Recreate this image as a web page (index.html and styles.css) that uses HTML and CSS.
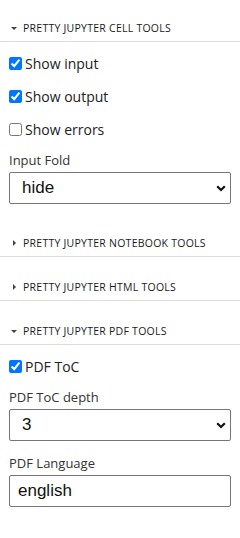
FILE: index.html
```html
<!DOCTYPE html>
<html>
<head>
<meta charset="utf-8">
<link rel="stylesheet" href="styles.css">
</head>
<body>
<div class="panel">
  <section class="sec sec-first">
    <div class="head"><span class="caret-down"></span><span class="title">PRETTY JUPYTER CELL TOOLS</span></div>
    <div class="body">
      <label class="check"><input type="checkbox" checked><span>Show input</span></label>
      <label class="check"><input type="checkbox" checked><span>Show output</span></label>
      <label class="check"><input type="checkbox"><span>Show errors</span></label>
      <div class="group">
        <div class="lbl">Input Fold</div>
        <div class="select"><span class="val">hide</span><svg class="chev" width="10" height="7" viewBox="0 0 10 7"><path d="M1.2 1.2 L5 5 L8.8 1.2" fill="none" stroke="#111" stroke-width="2.2"/></svg></div>
      </div>
    </div>
  </section>
  <section class="sec">
    <div class="head"><span class="caret-right"></span><span class="title">PRETTY JUPYTER NOTEBOOK TOOLS</span></div>
  </section>
  <section class="sec">
    <div class="head"><span class="caret-right"></span><span class="title">PRETTY JUPYTER HTML TOOLS</span></div>
  </section>
  <section class="sec">
    <div class="head"><span class="caret-down"></span><span class="title">PRETTY JUPYTER PDF TOOLS</span></div>
    <div class="body">
      <label class="check"><input type="checkbox" checked><span>PDF ToC</span></label>
      <div class="group">
        <div class="lbl">PDF ToC depth</div>
        <div class="select"><span class="val">3</span><svg class="chev" width="10" height="7" viewBox="0 0 10 7"><path d="M1.2 1.2 L5 5 L8.8 1.2" fill="none" stroke="#111" stroke-width="2.2"/></svg></div>
      </div>
      <div class="group">
        <div class="lbl">PDF Language</div>
        <div class="textbox"><span class="val2">english</span></div>
      </div>
    </div>
  </section>
</div>
</body>
</html>
```
FILE: styles.css
```css
html, body {
  margin: 0;
  padding: 0;
  background: #fff;
}
body {
  font-family: "Open Sans", "Noto Sans", sans-serif;
  color: #222;
  width: 240px;
  height: 538px;
  overflow: hidden;
}
.panel {
  display: flex;
  flex-direction: column;
  padding-top: 15px;
}
.sec {
  display: flex;
  flex-direction: column;
  margin-top: 17px;
}
.sec-first {
  margin-top: 0;
}
.head {
  height: 26px;
  border-bottom: 1px solid #dcdcdc;
  display: flex;
  align-items: center;
  padding-left: 11px;
  box-sizing: content-box;
}
.caret-down {
  width: 0;
  height: 0;
  border-left: 3px solid transparent;
  border-right: 3px solid transparent;
  border-top: 3px solid #444;
  margin-right: 6px;
}
.caret-right {
  width: 0;
  height: 0;
  border-top: 3px solid transparent;
  border-bottom: 3px solid transparent;
  border-left: 3px solid #444;
  margin-left: 2px;
  margin-right: 7px;
}
.title {
  font-size: 10.5px;
  font-weight: 500;
  color: #1a1a1a;
  letter-spacing: 0.25px;
}
.body {
  display: flex;
  flex-direction: column;
  padding: 5px 9px 9px 9px;
}
.check {
  height: 33px;
  display: flex;
  align-items: center;
  font-size: 14px;
  color: #222;
}
.check input {
  margin: 0 3px 0 0;
  width: 13px;
  height: 13px;
  accent-color: #0075ff;
}
.group {
  display: flex;
  flex-direction: column;
  margin-top: 4px;
}
.group + .group {
  margin-top: 12px;
}
.lbl {
  font-size: 13px;
  line-height: 20px;
  color: #333;
  margin-bottom: 2px;
}
.select, .textbox {
  height: 30px;
  border: 1px solid #767676;
  border-radius: 2px;
  display: flex;
  align-items: center;
  font-family: "Liberation Sans", Arial, sans-serif;
  font-size: 17px;
  color: #111;
}
.select {
  justify-content: space-between;
  padding: 0 4px 0 12px;
}
.textbox {
  padding: 0 8px;
}
.chev {
  display: block;
}
```
